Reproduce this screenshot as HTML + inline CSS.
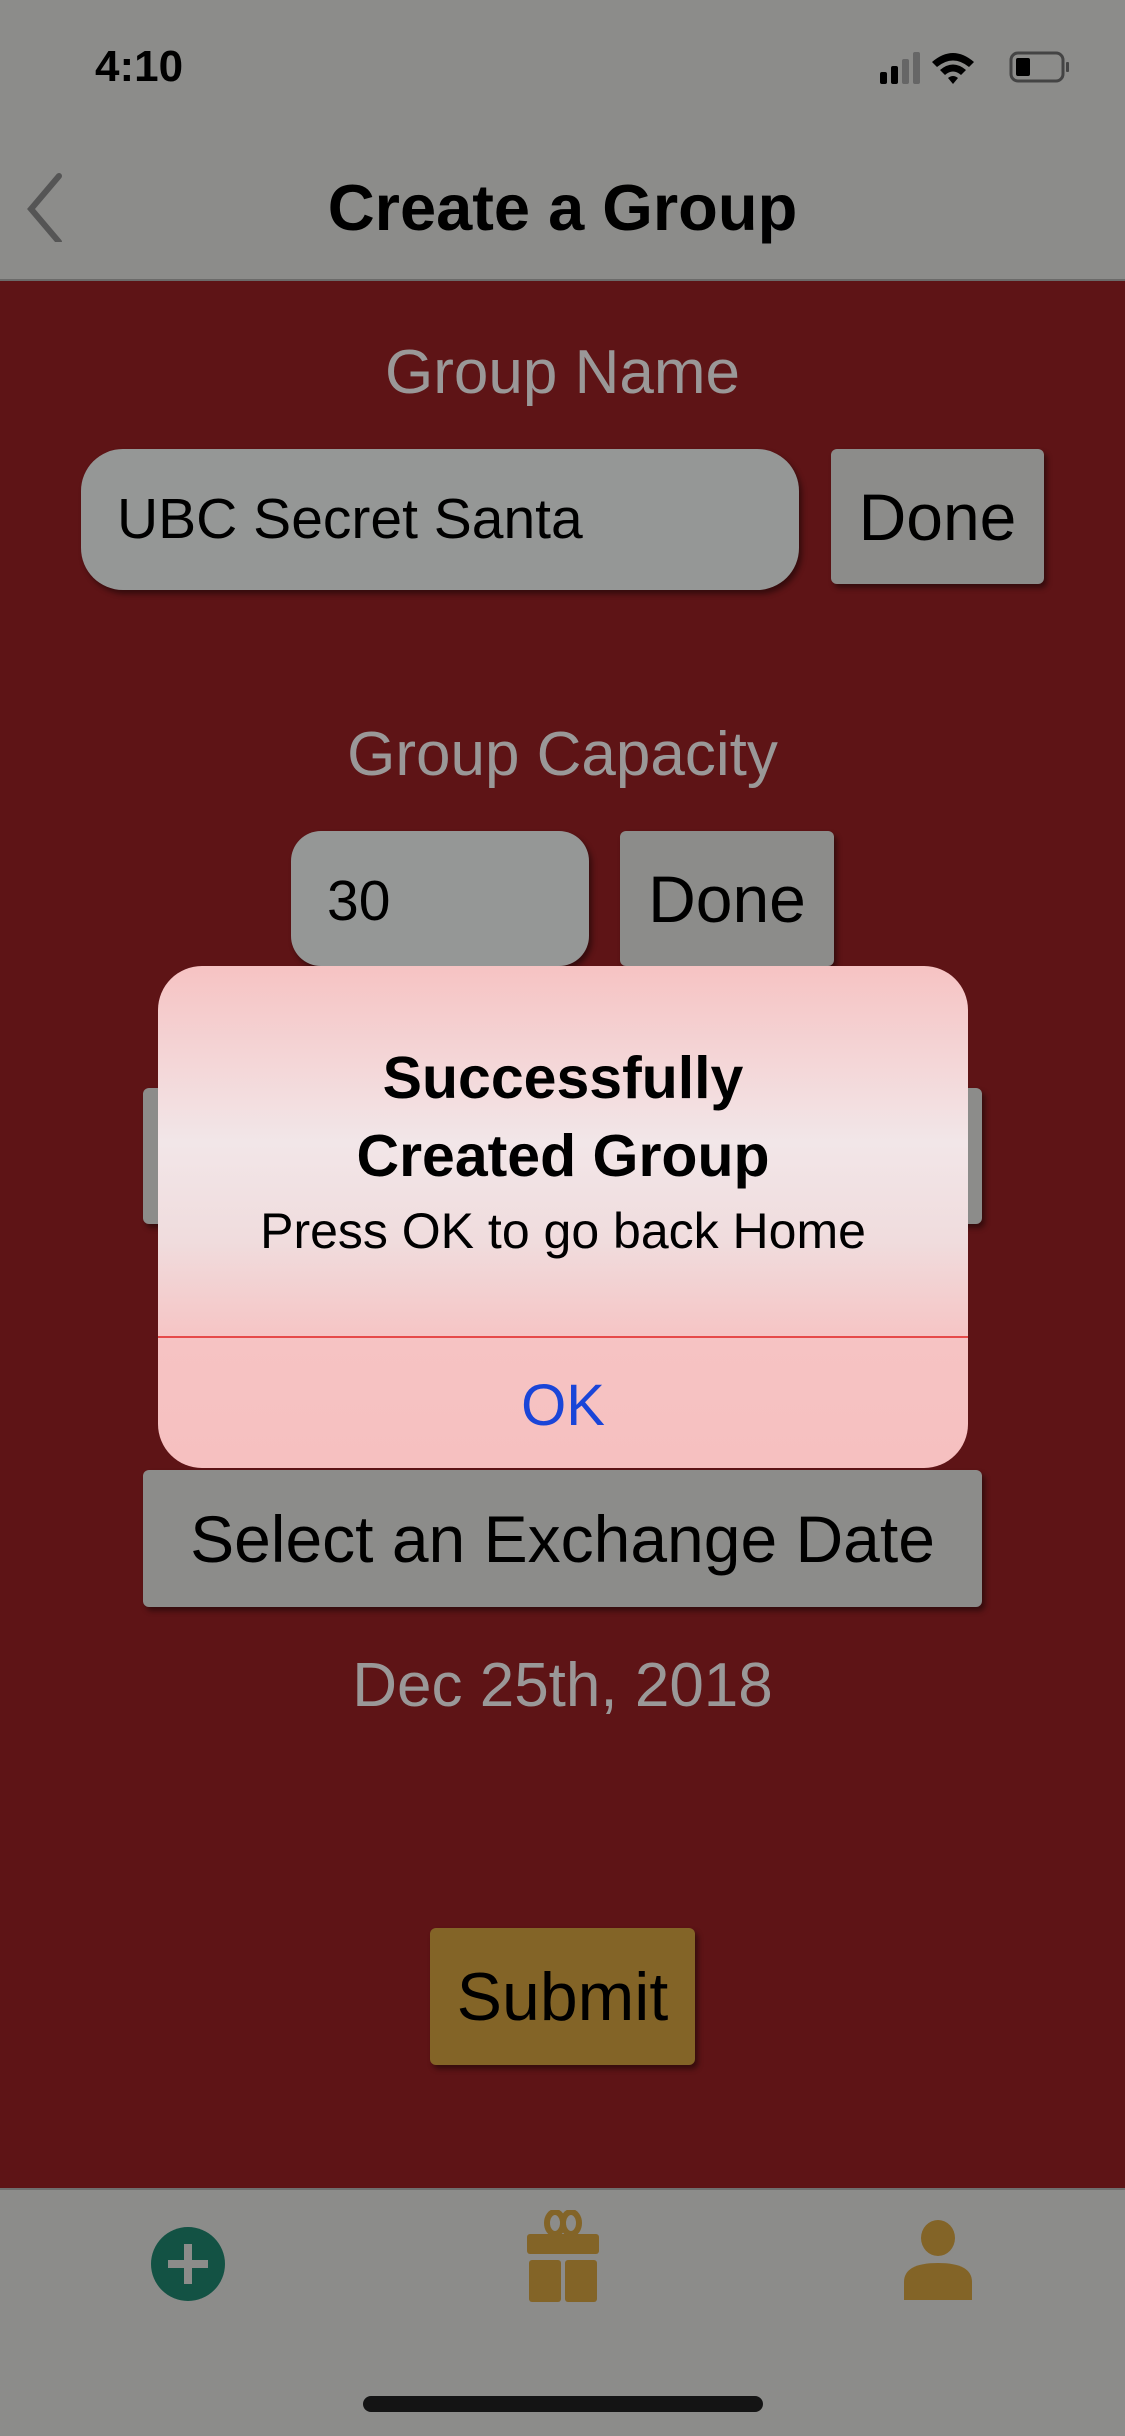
<!DOCTYPE html>
<html><head><meta charset="utf-8"><style>
*{margin:0;padding:0;box-sizing:border-box}
body{width:1125px;height:2436px;position:relative;overflow:hidden;background:#5e1416;font-family:"Liberation Sans",sans-serif}
.a{position:absolute}
.c{display:flex;align-items:center;justify-content:center}
.btn{background:#8c8c8a;border-radius:6px;box-shadow:3px 4px 6px rgba(0,0,0,.45);color:#000}
.inp{background:#959796;border-radius:42px;box-shadow:3px 4px 6px rgba(0,0,0,.45)}
.lbl{color:#9a9898;font-size:62px;width:1125px;text-align:center}
</style></head><body>
<div class="a" style="left:0;top:0;width:1125px;height:281px;background:#8c8c8a;border-bottom:2px solid #6b6b6a"></div>
<div class="a" style="left:95px;top:42px;font-size:44px;font-weight:bold;color:#000">4:10</div>
<svg class="a" style="left:880px;top:50px" width="200" height="36" viewBox="0 0 200 36">
<rect x="0" y="22" width="7" height="12" rx="2" fill="#000"/><rect x="11" y="16" width="7" height="18" rx="2" fill="#000"/><rect x="22" y="9" width="7" height="25" rx="2" fill="#666"/><rect x="33" y="2" width="7" height="32" rx="2" fill="#666"/>
<path d="M52 12 Q73 -6 94 12 L89 17 Q73 4 57 17Z M60 20 Q73 9 86 20 L81 25 Q73 18 65 25Z M68 28 Q73 24 78 28 L73 34Z" fill="#000"/>
<rect x="131" y="3" width="52" height="28" rx="7" fill="none" stroke="#444" stroke-width="3"/><rect x="136" y="8" width="14" height="18" rx="2" fill="#000"/><rect x="186" y="12" width="3" height="10" rx="1" fill="#444"/></svg>
<svg class="a" style="left:25px;top:172px" width="40" height="70"><path d="M34 4 L6 37 L34 70" fill="none" stroke="#555" stroke-width="6" stroke-linecap="round"/></svg>
<div class="a" style="left:0;top:170px;width:1125px;text-align:center;font-size:65px;font-weight:bold;color:#000">Create a Group</div>
<div class="a lbl" style="top:337px">Group Name</div>
<div class="a inp" style="left:81px;top:449px;width:718px;height:141px;font-size:57px;padding:37px 0 0 36px">UBC Secret Santa</div>
<div class="a btn c" style="left:831px;top:449px;width:213px;height:135px;font-size:66px">Done</div>
<div class="a lbl" style="top:719px">Group Capacity</div>
<div class="a inp" style="left:291px;top:831px;width:298px;height:135px;border-radius:30px;font-size:57px;padding:37px 0 0 36px">30</div>
<div class="a btn c" style="left:620px;top:831px;width:214px;height:135px;font-size:66px">Done</div>
<div class="a btn" style="left:143px;top:1088px;width:839px;height:136px"></div>
<div class="a" style="left:158px;top:966px;width:810px;height:502px;border-radius:44px;background:linear-gradient(#f6c3c3 0%,#f2e6e8 35%,#f0dcdd 55%,#f6c3c3 75%,#f6c0c0 100%)"></div>
<div class="a" style="left:158px;top:1336px;width:810px;height:2px;background:#e64a4a"></div>
<div class="a" style="left:158px;top:1039px;width:810px;text-align:center;font-size:59px;font-weight:bold;line-height:78px;color:#000">Successfully<br>Created Group</div>
<div class="a" style="left:158px;top:1202px;width:810px;text-align:center;font-size:50px;color:#000">Press OK to go back Home</div>
<div class="a" style="left:158px;top:1372px;width:810px;text-align:center;font-size:58px;color:#1a45d8">OK</div>
<div class="a btn c" style="left:143px;top:1470px;width:839px;height:137px;font-size:66px">Select an Exchange Date</div>
<div class="a lbl" style="top:1650px">Dec 25th, 2018</div>
<div class="a c" style="left:430px;top:1928px;width:265px;height:137px;background:#836427;border-radius:6px;box-shadow:3px 4px 6px rgba(0,0,0,.45);font-size:68px;color:#000">Submit</div>
<div class="a" style="left:0;top:2188px;width:1125px;height:248px;background:#8c8c8a;border-top:2px solid #6f6f6e"></div>
<svg class="a" style="left:150px;top:2226px" width="76" height="76"><circle cx="38" cy="38" r="37" fill="#135244"/><rect x="34" y="18" width="8" height="40" fill="#8c8c8a"/><rect x="18" y="34" width="40" height="8" fill="#8c8c8a"/></svg>
<svg class="a" style="left:525px;top:2210px" width="76" height="94"><ellipse cx="30" cy="13" rx="8" ry="11" fill="none" stroke="#836427" stroke-width="6"/><ellipse cx="46" cy="13" rx="8" ry="11" fill="none" stroke="#836427" stroke-width="6"/><rect x="2" y="24" width="72" height="20" rx="3" fill="#836427"/><rect x="4" y="50" width="32" height="42" rx="3" fill="#836427"/><rect x="40" y="50" width="32" height="42" rx="3" fill="#836427"/></svg>
<svg class="a" style="left:903px;top:2220px" width="70" height="80"><ellipse cx="35" cy="18" rx="17" ry="18" fill="#836427"/><path d="M1 80 L1 62 Q1 43 35 43 Q69 43 69 62 L69 80Z" fill="#836427"/></svg>
<div class="a" style="left:363px;top:2396px;width:400px;height:16px;border-radius:8px;background:#141414"></div>
</body></html>
